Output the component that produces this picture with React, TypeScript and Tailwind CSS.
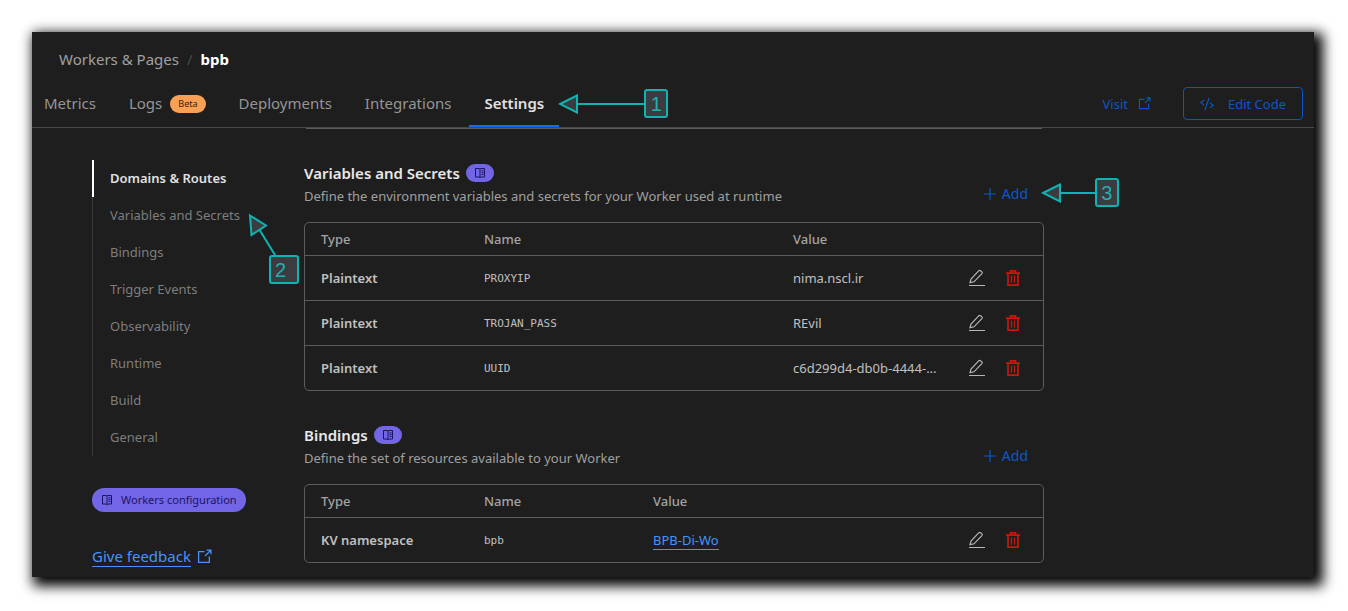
import React from "react";

const LINE = "border-[#5c5c5c]";

function ExternalIcon({ className }: { className: string }) {
  return (
    <svg viewBox="0 0 14 14" className={className} fill="none" stroke="currentColor" strokeWidth="1.2" aria-hidden="true">
      <path d="M7 2.5H1.5v10h10V7" />
      <path d="M9 1h4v4M13 1 7.5 6.5" />
    </svg>
  );
}

function CodeIcon() {
  return (
    <svg viewBox="0 0 14 14" className="size-3.5" fill="none" stroke="currentColor" strokeWidth="1.1" aria-hidden="true">
      <path d="M4 3.2.8 5.6 4 8M10 6l3.2 2.4L10 10.8M9.2.8 4.8 13.2" />
    </svg>
  );
}

function BookIcon() {
  return (
    <svg viewBox="0 0 12 12" className="h-3 w-3" fill="none" stroke="currentColor" strokeWidth="1" aria-hidden="true">
      <path d="M1.5 1.5h3.7l.8.5.8-.5h3.7v8.5H6.8l-.8.8-.8-.8H1.5zM6 2v8.8M7.5 3.8h2M7.5 5.6h2M7.5 7.4h2" />
    </svg>
  );
}

function PlusIcon() {
  return (
    <svg viewBox="0 0 12 12" className="size-3" fill="none" stroke="currentColor" strokeWidth="1.2" aria-hidden="true">
      <path d="M6 0v12M0 6h12" />
    </svg>
  );
}

function PencilIcon() {
  return (
    <svg viewBox="0 0 18 18" className="size-[18px]" fill="none" stroke="currentColor" strokeWidth="1.2" aria-hidden="true">
      <path d="M2 13.6 3 10 10.9 1.7q.8-.7 1.6 0l1.4 1.2q.8.8 0 1.7L6 12.8zM1 16.5h16" />
    </svg>
  );
}

function TrashIcon() {
  return (
    <svg viewBox="0 0 16 18" className="h-[18px] w-4" fill="none" stroke="currentColor" strokeWidth="1.7" aria-hidden="true">
      <path d="M1 4.2h14M5.5 4V1.8h5V4M3 4.5v11.6h10V4.5" />
      <path strokeWidth="1.3" d="M6.5 6.5v7.3M9.5 6.5v7.3" />
    </svg>
  );
}

const markBox =
  "flex h-[29px] items-center rounded-[3px] border-2 border-[#0fb3b3] bg-[#3a3c3f] text-xl leading-none font-normal text-[#22b0b0] font-['Liberation_Sans',sans-serif]";

function LeftMark({ label, wide }: { label: string; wide?: boolean }) {
  return (
    <span className="flex items-center">
      <svg
        viewBox={wide ? "0 0 86 20" : "0 0 54 20"}
        className={wide ? "h-5 w-[86px]" : "h-5 w-[54px]"}
        fill="#3a3c3f"
        stroke="#0fb3b3"
        strokeWidth="2"
        aria-hidden="true"
      >
        <path d="M19 10H86" />
        <path d="M2 10 19 1.5v17z" />
      </svg>
      <span className={`${markBox} w-6 justify-center`}>{label}</span>
    </span>
  );
}

function AddButton({ children }: { children?: React.ReactNode }) {
  return (
    <div className="relative mr-4 mb-[3px]">
      <button type="button" className="flex items-center gap-1.5 text-sm leading-5 text-[#0b57c9]">
        <PlusIcon />
        Add
      </button>
      {children}
    </div>
  );
}

type Row = { type: string; name: string; value: string; link?: boolean };

function DataTable({ rows, nameCol, label }: { rows: Row[]; nameCol: string; label: string }) {
  return (
    <div className={`rounded-[5px] border ${LINE}`}>
      <table aria-label={label} className="w-full table-fixed text-left text-[13px] leading-5">
        <colgroup>
          <col className="w-[163px]" />
          <col className={nameCol} />
          <col />
          <col className="w-[92px]" />
        </colgroup>
        <thead>
          <tr className="h-8 text-[#a3a3a3]">
            <th className="pl-4 font-medium">Type</th>
            <th className="pl-4 font-medium">Name</th>
            <th className="pl-4 font-medium">Value</th>
            <td />
          </tr>
        </thead>
        <tbody>
          {rows.map((r) => (
            <tr key={r.name} className={`h-[45px] border-t ${LINE} text-[#c0c0c0]`}>
              <td className="pl-4 font-semibold">{r.type}</td>
              <td className="pl-4">
                <span className="font-['DejaVu_Sans_Mono',monospace] text-[11px]">{r.name}</span>
              </td>
              <td className="pl-4 whitespace-nowrap">
                {r.link ? (
                  <a href="#kv" className="border-b border-[#4693ff] text-[#4693ff]">{r.value}</a>
                ) : (
                  r.value
                )}
              </td>
              <td>
                <div className="flex items-center justify-end gap-[19px] pr-[22px]">
                  <button type="button" aria-label={`Edit ${r.name}`} className="text-[#b5b5b5]"><PencilIcon /></button>
                  <button type="button" aria-label={`Delete ${r.name}`} className="text-[#c8170d]"><TrashIcon /></button>
                </div>
              </td>
            </tr>
          ))}
        </tbody>
      </table>
    </div>
  );
}

function Section({ title, text, rows, nameCol, mark }: {
  title: string; text: string; rows: Row[]; nameCol: string; mark?: React.ReactNode;
}) {
  return (
    <section>
      <div className="mb-[15px] flex items-end justify-between">
        <div>
          <h2 className="flex items-center gap-1.5 text-[15px] leading-6 font-semibold text-[#e8e8e8]">
            {title}
            <a href="#docs" aria-label={`${title} documentation`} className="flex h-[18px] w-7 items-center justify-center rounded-full bg-[#7366e6] text-[#1c1463]">
              <BookIcon />
            </a>
          </h2>
          <p className="text-[13px] leading-[22px] text-[#a0a0a0]">{text}</p>
        </div>
        <AddButton>{mark}</AddButton>
      </div>
      <DataTable rows={rows} nameCol={nameCol} label={title} />
    </section>
  );
}

const navItems = ["Domains & Routes", "Variables and Secrets", "Bindings", "Trigger Events", "Observability", "Runtime", "Build", "General"];

const variables: Row[] = [
  { type: "Plaintext", name: "PROXYIP", value: "nima.nscl.ir" },
  { type: "Plaintext", name: "TROJAN_PASS", value: "REvil" },
  { type: "Plaintext", name: "UUID", value: "c6d299d4-db0b-4444-..." },
];

const bindings: Row[] = [{ type: "KV namespace", name: "bpb", value: "BPB-Di-Wo", link: true }];

export default function App() {
  return (
    <div className="bg-white pt-8 pr-[34px] pb-[34px] pl-8 font-['Noto_Sans',sans-serif]">
      <div className="bg-[#1e1e1e] pb-2.5 shadow-[5px_5px_12px_4px_#000]">
        <header className="border-b border-[#484848]">
          <nav aria-label="Breadcrumb" className="flex gap-2 pt-[15px] pl-[27px] text-[15px] leading-6">
            <a href="#workers" className="text-[#a0a0a0]">Workers &amp; Pages</a>
            <span className="text-[#4a4a4a]">/</span>
            <span className="font-bold text-white">bpb</span>
          </nav>
          <div className="flex items-end justify-between pr-[11px] pl-3">
            <nav aria-label="Worker" className="flex items-end gap-[33px] pt-5 text-[15px] leading-6 text-[#959595]">
              <a href="#metrics" className="pb-3">Metrics</a>
              <a href="#logs" className="flex items-center gap-2 pb-3">
                Logs
                <span className="mt-0.5 rounded-full bg-[#faa054] px-2 text-[9px] leading-[18px] text-[#3a2410]">Beta</span>
              </a>
              <a href="#deployments" className="pb-3">Deployments</a>
              <a href="#integrations" className="pb-3">Integrations</a>
              <div className="relative -ml-[15px]">
                <a href="#settings" aria-current="page" className="block border-b-2 border-[#0f6bff] px-[15px] pb-2.5 font-semibold text-[#e0e0e0]">
                  Settings
                </a>
                <div className="absolute -top-0.5 left-[89px]">
                  <LeftMark label="1" wide />
                </div>
              </div>
            </nav>
            <div className="flex items-center gap-8 pb-[7px] text-[13px] leading-5 text-[#0b57c9]">
              <a href="#visit" className="flex items-center gap-2.5">
                Visit
                <ExternalIcon className="size-[13px]" />
              </a>
              <button type="button" className="flex h-[33px] items-center gap-3.5 rounded border border-[#0b57c9] px-4">
                <CodeIcon />
                Edit Code
              </button>
            </div>
          </div>
        </header>

        <div className="flex pl-[60px]">
          <aside className="w-[212px] shrink-0 pt-8">
            <nav aria-label="Settings sections" className="border-l border-[#3a3a3a]">
              {navItems.map((item, i) => (
                <div key={item} className="relative">
                  <a
                    href={`#${item}`}
                    className={
                      i === 0
                        ? "-ml-px block border-l-2 border-white pl-4 text-[13px] leading-[37px] font-semibold text-[#e0e0e0]"
                        : "block pl-[17px] text-[13px] leading-[37px] text-[#7d7d7d]"
                    }
                  >
                    {item}
                  </a>
                  {item === "Variables and Secrets" && (
                    <div className="absolute top-4 left-[154px] z-10">
                      <svg viewBox="0 0 30 44" className="h-11 w-[30px]" fill="#3a3c3f" stroke="#0fb3b3" strokeWidth="2" aria-hidden="true">
                        <path d="M12 16 28 42" />
                        <path d="M3 2.5 19 12.5 4.5 22z" />
                      </svg>
                      <span className={`${markBox} absolute top-[42px] left-[22px] w-[30px] pl-1`}>2</span>
                    </div>
                  )}
                </div>
              ))}
            </nav>
            <a href="#configuration" className="mt-8 flex h-6 w-fit items-center gap-2 rounded-full bg-[#7366e6] px-[9px] text-[11px] text-[#1c1463]">
              <BookIcon />
              Workers configuration
            </a>
            <a href="#feedback" className="mt-[34px] flex items-center gap-1.5 text-[15px] leading-5 text-[#4693ff]">
              <span className="border-b border-[#4693ff]">Give feedback</span>
              <ExternalIcon className="size-[15px]" />
            </a>
          </aside>
          <main className="max-w-[740px] flex-1">
            <div className="mx-0.5 h-px bg-[#5c5c5c]" />
            <div className="flex flex-col gap-8 pt-8">
              <Section
                title="Variables and Secrets"
                text="Define the environment variables and secrets for your Worker used at runtime"
                rows={variables}
                nameCol="w-[309px]"
                mark={
                  <div className="absolute -top-1.5 left-[57px]">
                    <LeftMark label="3" />
                  </div>
                }
              />
              <Section
                title="Bindings"
                text="Define the set of resources available to your Worker"
                rows={bindings}
                nameCol="w-[169px]"
              />
            </div>
          </main>
        </div>
      </div>
    </div>
  );
}
